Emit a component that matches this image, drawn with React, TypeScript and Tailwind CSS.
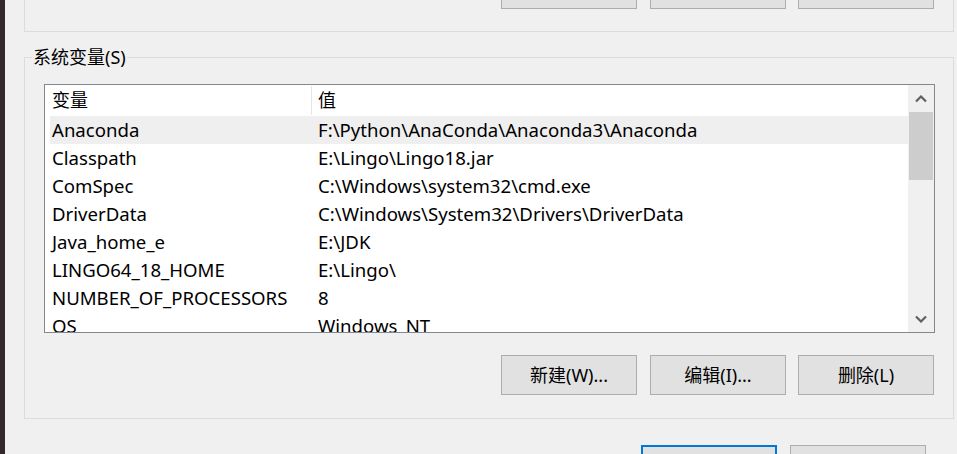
import React from 'react'

const VARS = [
  { name: 'Anaconda', value: 'F:\\Python\\AnaConda\\Anaconda3\\Anaconda' },
  { name: 'Classpath', value: 'E:\\Lingo\\Lingo18.jar' },
  { name: 'ComSpec', value: 'C:\\Windows\\system32\\cmd.exe' },
  { name: 'DriverData', value: 'C:\\Windows\\System32\\Drivers\\DriverData' },
  { name: 'Java_home_e', value: 'E:\\JDK' },
  { name: 'LINGO64_18_HOME', value: 'E:\\Lingo\\' },
  { name: 'NUMBER_OF_PROCESSORS', value: '8' },
  { name: 'OS', value: 'Windows_NT' },
]

function WinButton({ label, className = '' }: { label?: string; className?: string }) {
  return (
    <div
      className={
        'w-[136px] h-[40px] shrink-0 bg-[#e1e1e1] border border-[#adadad] flex items-center justify-center text-[18px] text-black ' +
        className
      }
    >
      {label}
    </div>
  )
}

function Chevron({ down = false }: { down?: boolean }) {
  return (
    <svg width="12" height="8" viewBox="0 0 12 8" className="block">
      <path
        d={down ? 'M1 1.5 L6 6.5 L11 1.5' : 'M1 6.5 L6 1.5 L11 6.5'}
        fill="none"
        stroke="#606060"
        strokeWidth="2.2"
      />
    </svg>
  )
}

export default function App() {
  return (
    <div
      className="w-[957px] h-[454px] bg-[#f0f0f0] flex overflow-hidden text-black"
      style={{ fontFamily: '"Noto Sans", "Noto Sans CJK SC", sans-serif' }}
    >
      {/* desktop edge behind the dialog */}
      <div className="w-[5px] shrink-0 bg-[#33292a]" />

      <div className="w-[930px] ml-[19px] flex flex-col">
        {/* user variables group (scrolled off the top) */}
        <div className="-mt-[40px] h-[72px] shrink-0 border-x border-b border-[#dcdcdc] flex justify-end items-start pt-[9px] pr-[19px]">
          <WinButton />
          <WinButton className="ml-[13px]" />
          <WinButton className="ml-[12px]" />
        </div>

        {/* system variables group */}
        <div className="mt-[25px] shrink-0 border border-[#dcdcdc] flex flex-col pb-[23px]">
          <div className="-mt-[13px] ml-[7px] px-[1px] self-start bg-[#f0f0f0] text-[18px] leading-[24px]">
            系统变量(S)
          </div>

          <div className="mt-[15px] ml-[19px] w-[891px] h-[249px] border border-[#828790] bg-white flex">
            <div className="flex-1 flex flex-col overflow-hidden">
              {/* header */}
              <div className="h-[31px] shrink-0 flex text-[18px] leading-[31px]">
                <div className="w-[267px] shrink-0 pl-[7px] border-r border-[#e5e5e5] my-[1px] leading-[29px]">变量</div>
                <div className="pl-[6px]">值</div>
              </div>
              {/* rows */}
              <div className="flex flex-col pl-[5px]">
                {VARS.map((v, i) => (
                  <div
                    key={v.name}
                    className={
                      'h-[28px] shrink-0 flex text-[18.6px] leading-[28px] whitespace-nowrap ' +
                      (i === 0 ? 'bg-[#efefef]' : '')
                    }
                  >
                    <div className="w-[262px] shrink-0 pl-[2px]">{v.name}</div>
                    <div className="pl-[6px]">{v.value}</div>
                  </div>
                ))}
              </div>
            </div>

            {/* vertical scrollbar */}
            <div className="w-[26px] shrink-0 bg-[#f0f0f0] flex flex-col">
              <div className="h-[27px] flex items-center justify-center">
                <Chevron />
              </div>
              <div className="h-[68px] mx-[1px] bg-[#cdcdcd]" />
              <div className="flex-1" />
              <div className="h-[27px] flex items-center justify-center">
                <Chevron down />
              </div>
            </div>
          </div>

          <div className="mt-[22px] flex justify-end pr-[19px]">
            <WinButton label="新建(W)..." />
            <WinButton label="编辑(I)..." className="ml-[13px]" />
            <WinButton label="删除(L)" className="ml-[12px]" />
          </div>
        </div>

        {/* dialog buttons */}
        <div className="mt-[26px] flex justify-end pr-[28px]">
          <div className="w-[136px] h-[40px] shrink-0 bg-[#e1e1e1] border-2 border-[#0078d7]" />
          <WinButton className="ml-[13px]" />
        </div>
      </div>
    </div>
  )
}
